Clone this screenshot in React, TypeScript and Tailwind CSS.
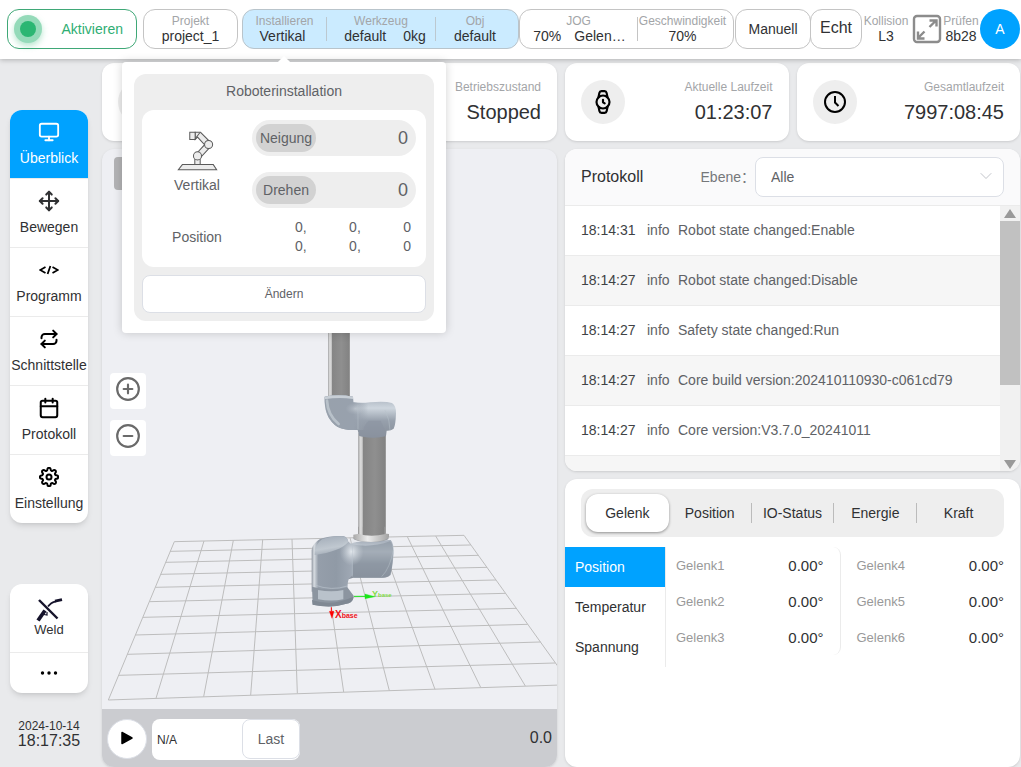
import { useState, type ReactNode } from 'react'
import { Calendar, ChevronDown, CircleMinus, CirclePlus, Monitor, Move, Repeat, Watch } from 'lucide-react'
import { FiSettings } from 'react-icons/fi'
import clsx from 'clsx'

const logs = [
  { time: '18:14:31', level: 'info', message: 'Robot state changed:Enable' },
  { time: '18:14:27', level: 'info', message: 'Robot state changed:Disable' },
  { time: '18:14:27', level: 'info', message: 'Safety state changed:Run' },
  { time: '18:14:27', level: 'info', message: 'Core build version:202410110930-c061cd79' },
  { time: '18:14:27', level: 'info', message: 'Core version:V3.7.0_20241011' },
]

const tabs = ['Gelenk', 'Position', 'IO-Status', 'Energie', 'Kraft']
const sections = ['Position', 'Temperatur', 'Spannung']

function CodeIcon() {
  return (
    <svg width="20" height="20" viewBox="0 0 20 20" fill="none" stroke="currentColor" strokeWidth="1.8">
      <path d="M6.5 7 1.2 10l5.3 3M13.5 7l5.3 3-5.3 3M11.4 6 8.6 14" />
    </svg>
  )
}

function ClockIcon() {
  return (
    <svg width="24" height="24" viewBox="0 0 24 24" fill="none" stroke="currentColor" strokeWidth="2">
      <circle cx="12" cy="12" r="10" />
      <path d="M12 6v6.5l3.5 3.5" />
    </svg>
  )
}

function ExpandIcon() {
  return (
    <svg width="30" height="30" viewBox="0 0 30 30" fill="none" stroke="#8c8c8c" strokeWidth="2.400">
      <rect x="2" y="2" width="26" height="26" rx="3" />
      <path d="M17.500 13l6.500-6.500M17.500 6.500H24.500V12.500M12.500 17.500l-6.500 6.500M6 17.500V24.500H12.500" />
    </svg>
  )
}

function WeldIcon() {
  return (
    <svg width="27" height="24" viewBox="0 0 27 24" fill="none" stroke="#15132b">
      <path d="M3 2l18.500 18.500" strokeWidth="2.400" />
      <path d="M2 22.500l7-10" strokeWidth="3.800" />
      <path d="M12 8.500c2-3 5-4.500 8-5.200" strokeWidth="1.800" />
      <path d="M19 3.200l7-1.600" strokeWidth="2.800" />
      <path d="M8 16.500l3 .5v-3" strokeWidth="1.200" />
    </svg>
  )
}

function VerticalMountIcon() {
  return (
    <svg width="41" height="41" viewBox="170 210 122 122" fill="#ececec" stroke="#5a5a5a" strokeWidth="3">
      <path d="M174 328H288L278 313H186Z" />
      <path d="M223 296h16v17h-16zM228 280l24-26 14 10-24 26z" />
      <path d="M224 217h16l26 26-13 12-22-24-7 7z" />
      <path d="M208 217h16v21h-16z" />
      <path d="M224 236l14-18" />
      <circle cx="231" cy="287" r="12" />
      <circle cx="264" cy="253" r="12" />
    </svg>
  )
}

// end points of the floor lines, projected
const rowsLeft = [[223, 65], [210, 94], [197, 127], [182, 163], [166, 202], [149, 245], [129, 292], [106, 345], [82, 403], [56, 466], [25, 540]]
const rowsRight = [[1092, 46], [1112, 75], [1135, 106], [1161, 142], [1188, 180], [1217, 220], [1249, 265], [1283, 313], [1322, 366], [1366, 429], [1413, 494]]
const colsTop = [[223, 65], [312, 63], [400, 61], [488, 59], [576, 57], [664, 55], [750, 53], [838, 52], [922, 50], [1007, 48], [1092, 46]]
const colsBottom = [[25, 540], [168, 535], [311, 530], [452, 525], [592, 520], [731, 516], [868, 512], [1005, 508], [1142, 502], [1276, 498], [1413, 494]]

function RobotScene() {
  return (
    <svg className="absolute inset-0 h-full w-full" viewBox="102 149 455 560" preserveAspectRatio="xMidYMid slice">
      <defs>
        <linearGradient id="tube" x1="0" x2="1">
          <stop offset="0" stopColor="#8c8c8c" />
          <stop offset="0.06" stopColor="#dcdcdc" />
          <stop offset="0.14" stopColor="#cfcfcf" />
          <stop offset="0.18" stopColor="#858585" />
          <stop offset="0.6" stopColor="#8f8f8f" />
          <stop offset="0.95" stopColor="#838383" />
          <stop offset="1" stopColor="#a5a5a5" />
        </linearGradient>
        <linearGradient id="ring" x1="0" x2="1">
          <stop offset="0" stopColor="#a9a9a9" />
          <stop offset="0.4" stopColor="#ececec" />
          <stop offset="1" stopColor="#a2a2a2" />
        </linearGradient>
        <linearGradient id="joint" x1="0" y1="0" x2="0" y2="1">
          <stop offset="0" stopColor="#a3acb8" />
          <stop offset="0.3" stopColor="#ced6de" />
          <stop offset="0.6" stopColor="#97a0ac" />
          <stop offset="1" stopColor="#868e99" />
        </linearGradient>
        <linearGradient id="elbow" x1="0" x2="1">
          <stop offset="0" stopColor="#98a1ac" />
          <stop offset="0.65" stopColor="#98a1ad" />
          <stop offset="1" stopColor="#98a1ad" stopOpacity="0" />
        </linearGradient>
        <linearGradient id="body" x1="0" x2="1">
          <stop offset="0" stopColor="#8d949e" />
          <stop offset="0.06" stopColor="#d8dde2" />
          <stop offset="0.16" stopColor="#959eaa" />
          <stop offset="0.6" stopColor="#909aa6" />
          <stop offset="1" stopColor="#a0a9b5" />
        </linearGradient>
        <linearGradient id="cap" x1="0" y1="0" x2="0.3" y2="1">
          <stop offset="0" stopColor="#a1abb7" />
          <stop offset="0.7" stopColor="#c0c8d0" />
          <stop offset="1" stopColor="#a3acb7" />
        </linearGradient>
        <radialGradient id="glow">
          <stop offset="0" stopColor="#e4e9ee" />
          <stop offset="1" stopColor="#c3cbd3" stopOpacity="0" />
        </radialGradient>
      </defs>

      {/* Floor */}
      <g transform="translate(100 520) scale(0.33333)" stroke="#bdbdbd" strokeWidth="3">
        {rowsLeft.map(([x, y], i) => (
          <line key={`r${i}`} x1={x} y1={y} x2={rowsRight[i][0]} y2={rowsRight[i][1]} />
        ))}
        {colsTop.map(([x, y], i) => (
          <line key={`c${i}`} x1={x} y1={y} x2={colsBottom[i][0]} y2={colsBottom[i][1]} />
        ))}
      </g>

      {/* Robot arm */}
      <g transform="translate(290 330) scale(0.33333)">
        <path d="M115-60H180V200H115Z" fill="url(#tube)" />
        <path d="M205 310H288V620H205Z" fill="url(#tube)" />

        <path d="M104 200Q145 192 189 200L190 217Q215 220 240 217Q285 213 306 219Q319 228 318 250Q317 285 311 296Q302 303 290 302L288 318Q250 328 208 318L203 300Q165 302 142 290Q106 266 104 215Z" fill="url(#joint)" />
        <path d="M104 200Q145 192 189 200L190 217Q215 220 235 218V300H203Q165 302 142 290Q106 266 104 215Z" fill="url(#elbow)" />
        <path d="M111 212Q113 256 146 282" fill="none" stroke="#c6ced6" strokeWidth="8" strokeLinecap="round" opacity=".7" />
        <ellipse cx="196" cy="236" rx="30" ry="18" fill="url(#glow)" opacity=".4" />
        <path d="M104 200Q145 192 189 200L189 207Q146 201 104 208Z" fill="#c8cfd6" />
        <path d="M218 302Q226 280 236 272H272Q282 290 288 318Q250 328 208 318L205 300Z" fill="#8c95a1" opacity=".6" />
        <path d="M204 225V298M285 240Q300 270 300 300" fill="none" stroke="#b9c2cb" strokeWidth="1.500" />

        <path d="M182 642Q200 632 240 634L302 630Q312 640 311 670Q307 720 300 735Q292 744 275 743H190L175 748Z" fill="url(#joint)" />
        <path d="M182 642Q240 655 300 634Q310 640 310 670L303 734Q292 744 275 743H190Z" fill="#89929e" opacity=".6" />
        <path d="M65 660Q68 640 90 627Q120 616 160 618Q173 622 175 635L188 645V735L176 748Q172 760 172 785H65Z" fill="url(#body)" />
        <path d="M74 675Q72 645 96 628Q125 616 160 619Q175 624 174 637Q150 665 74 675Z" fill="url(#cap)" />
        <ellipse cx="185" cy="665" rx="36" ry="42" fill="url(#glow)" />
        <path d="M187 640V740M310 660Q300 715 275 740" fill="none" stroke="#b9c2cb" strokeWidth="1.500" />

        <path d="M66 770Q120 786 172 772L191 797Q192 812 176 820Q125 836 68 824Z" fill="#8c95a0" />
        <path d="M84 780Q125 787 160 780V808Q125 815 84 808Z" fill="#b9c2cb" />
        <path d="M66 810Q125 830 190 800Q190 814 176 820Q125 836 68 824Z" fill="#7f8893" />
        <path d="M74 765Q125 784 172 768" fill="none" stroke="#b9c2cb" strokeWidth="2" />

        <ellipse cx="243" cy="625" rx="53" ry="11" fill="#9ba0a5" />
        <path d="M190 614Q240 602 297 612V622Q288 634 243 636Q198 634 190 624Z" fill="url(#ring)" />
        <path d="M205 590H286V612Q245 622 205 612Z" fill="url(#tube)" />

        <g fill="#19e619" stroke="#19e619">
          <path d="M192 799h40" strokeWidth="3" />
          <path d="M225 792l30 8-30 6z" />
        </g>
        <g fill="#f00" stroke="#f00">
          <path d="M124 832v12" strokeWidth="3" />
          <path d="M118 844h14l-6 21z" />
        </g>
      </g>
      <g className="font-bold">
        <text x="372" y="597" fontSize="9" fill="#82dc48">
          Y<tspan fontSize="6">base</tspan>
        </text>
        <text x="335" y="618" fontSize="10" fill="#f01020">
          X<tspan fontSize="7">base</tspan>
        </text>
      </g>
    </svg>
  )
}

function Stat({ label, children, className }: { label: string; children: ReactNode; className?: string }) {
  return (
    <span className={clsx('flex flex-col items-center justify-center whitespace-nowrap', className)}>
      <span className="text-xs leading-[15px] text-[#a3a5a8]">{label}</span>
      <span className="text-sm leading-[15px] text-[#303133]">{children}</span>
    </span>
  )
}

function Pill({ label }: { label: string }) {
  return (
    <div className="flex h-9 items-center justify-between rounded-full bg-[#eee] pl-1 pr-2">
      <span className="flex h-7 w-[60px] items-center justify-center rounded-full bg-[#d2d2d2]">{label}</span>
      <span className="text-lg">0</span>
    </div>
  )
}

function InstallPopover() {
  return (
    <div className="absolute -left-[121px] top-[52px] z-20 w-[324px] rounded-sm bg-white p-3 text-sm text-[#606266] shadow-[0_0_10px_rgba(0,0,0,0.18)]">
      <div className="absolute -top-1 left-1/2 h-2.5 w-2.5 -translate-x-1/2 rotate-45 bg-white" />
      <div className="relative rounded-xl bg-[#eee] px-2 pb-2">
        <h2 className="flex h-9 items-center justify-center pb-0.5">Roboterinstallation</h2>
        <div className="rounded-xl bg-white pb-[11px] pr-2.5 pt-2.5">
          <div className="flex">
            <div className="flex w-[110px] flex-col items-center gap-1 pt-2.5">
              <VerticalMountIcon />
              <span>Vertikal</span>
            </div>
            <div className="flex flex-1 flex-col gap-4">
              <Pill label="Neigung" />
              <Pill label="Drehen" />
            </div>
          </div>
          <div className="mt-2 flex items-center justify-between pr-[5px] pt-0.5">
            <span className="w-[110px] text-center">Position</span>
            <div className="w-[116px] leading-[19px]">
              <div className="flex justify-between">
                <span>0,</span>
                <span>0,</span>
                <span>0</span>
              </div>
              <div className="flex justify-between">
                <span>0,</span>
                <span>0,</span>
                <span>0</span>
              </div>
            </div>
          </div>
        </div>
        <button className="mt-2 h-[38px] w-full rounded-lg border border-[#dcdfe6] bg-white text-xs">Ändern</button>
      </div>
    </div>
  )
}

function Header() {
  return (
    <header className="relative z-10 flex h-[59px] items-center bg-white pb-px pl-[7px] pr-px shadow-[0_1px_5px_rgba(0,0,0,0.25)]">
      <button className="flex h-10 w-[130px] shrink-0 items-center justify-between rounded-xl border border-[#3fa877] pl-1.5 pr-[13px] text-sm text-[#2fae73]">
        <span className="flex h-7 w-7 items-center justify-center rounded-full bg-[#94dab9] shadow-[0_3px_6px_rgba(46,184,114,0.35)]">
          <span className="h-4 w-4 rounded-full bg-[#2bb673]" />
        </span>
        Aktivieren
      </button>
      <button className="ml-1.5 h-10 w-[95px] shrink-0 rounded-xl border border-[#c4c4c4]">
        <Stat label="Projekt">project_1</Stat>
      </button>

      <div className="ml-1 flex h-10 flex-1 items-center rounded-xl border border-[#b9c4cb] bg-[#cbebff]">
        <div className="relative h-full w-[84px]">
          <button className="block h-full w-full">
            <Stat label="Installieren" className="h-6 border-r border-[#bcc8d0]">
              <span className="mr-1">Vertikal</span>
            </Stat>
          </button>
          <InstallPopover />
        </div>
        <button className="h-full w-[109px]">
          <Stat label="Werkzeug" className="h-6 border-r border-[#bcc8d0]">
            <span className="ml-2 mr-[17px]">default</span>0kg
          </Stat>
        </button>
        <button className="h-full flex-1 pr-1">
          <Stat label="Obj" className="h-6">
            default
          </Stat>
        </button>
      </div>

      <div className="flex h-10 w-[215px] shrink-0 items-center rounded-xl border border-[#c4c4c4]">
        <button className="h-full flex-1">
          <Stat label="JOG" className="h-6 border-r border-[#c4c4c4]">
            <span className="ml-0.5 mr-[13px]">70%</span>Gelen…
          </Stat>
        </button>
        <button className="h-full w-[95px] pr-1.5">
          <Stat label="Geschwindigkeit">70%</Stat>
        </button>
      </div>

      <button className="ml-px h-10 w-[76px] shrink-0 rounded-xl border border-[#c4c4c4] text-sm text-[#303133]">Manuell</button>
      <button className="-ml-px h-10 w-[52px] shrink-0 rounded-xl border border-[#c4c4c4] pb-0.5 text-base text-[#303133]">Echt</button>
      <Stat label="Kollision" className="mr-0.5 w-12 shrink-0">
        L3
      </Stat>
      <button className="shrink-0" title="Vollbild">
        <ExpandIcon />
      </button>
      <Stat label="Prüfen" className="w-[38px] shrink-0">
        8b28
      </Stat>
      <button className="h-10 w-10 shrink-0 rounded-full bg-[#00a2ff] text-sm text-white">A</button>
    </header>
  )
}

const navItems = [
  { label: 'Überblick', icon: <Monitor size={22} strokeWidth={2} /> },
  { label: 'Bewegen', icon: <Move size={22} strokeWidth={2.2} className="text-[#303133]" /> },
  { label: 'Programm', icon: <CodeIcon /> },
  { label: 'Schnittstelle', icon: <Repeat size={20} strokeWidth={2.4} /> },
  { label: 'Protokoll', icon: <Calendar size={22} strokeWidth={2.2} /> },
  { label: 'Einstellung', icon: <FiSettings size={20} strokeWidth={2.4} /> },
]

function Sidebar() {
  const [active, setActive] = useState('Überblick')

  return (
    <aside className="flex w-[102px] shrink-0 flex-col pl-2.5 pr-3.5 pt-[51px]">
      <nav className="divide-y divide-[#ebebeb] overflow-hidden rounded-xl bg-white shadow-md">
        {navItems.map((item) => (
          <button
            key={item.label}
            onClick={() => setActive(item.label)}
            className={clsx(
              'box-content flex h-[68px] w-full flex-col items-center text-sm text-[#303133]',
              item.label === active && 'bg-[#00a2ff]',
            )}
          >
            <span className={clsx('flex h-11 items-center', item.label === active ? 'text-white' : 'text-black')}>{item.icon}</span>
            <span className={clsx('leading-2', item.label === active && 'text-white')}>{item.label}</span>
          </button>
        ))}
      </nav>

      <div className="mt-[61px] divide-y divide-[#ebebeb] rounded-xl bg-white shadow-md">
        <button className="box-content flex h-[68px] w-full flex-col items-center text-[13px] leading-4 text-[#303133]">
          <span className="pt-3.5">
            <WeldIcon />
          </span>
          Weld
        </button>
        <button className="box-content flex h-10 w-full items-center justify-center" title="Mehr">
          <svg width="18" height="4" viewBox="0 0 18 4">
            <circle cx="2.500" cy="2" r="1.700" />
            <circle cx="9" cy="2" r="1.700" />
            <circle cx="15.500" cy="2" r="1.700" />
          </svg>
        </button>
      </div>

      <div className="mt-[26px] text-center text-[#303133]">
        <div className="text-xs leading-[14px]">2024-10-14</div>
        <div className="text-base leading-4">18:17:35</div>
      </div>
    </aside>
  )
}

function StatusCard({ icon, label, value }: { icon?: ReactNode; label: string; value: string }) {
  return (
    <div className="flex h-[78px] flex-1 items-center justify-between rounded-xl bg-white px-4 shadow-sm">
      <span className="flex h-11 w-11 items-center justify-center rounded-full bg-[#eee]">{icon}</span>
      <div className="text-right">
        <div className="text-xs leading-5 text-[#a3a5a8]">{label}</div>
        <div className="text-xl leading-[30px] text-[#303133]">{value}</div>
      </div>
    </div>
  )
}

function RobotView() {
  return (
    <section className="flex flex-1 flex-col overflow-hidden rounded-xl bg-[#eeeff3] shadow-sm">
      <div className="relative flex-1">
        <RobotScene />
        <div className="relative flex flex-col items-start px-2 pt-2">
          <div className="ml-1 h-[33px] w-10 rounded-sm bg-[#b3b3b5]" />
          <button className="mt-[183px] flex h-9 w-9 justify-center rounded bg-white pt-[3px] text-[#6a6a6a]" title="Vergrößern">
            <CirclePlus size={26} strokeWidth={2} />
          </button>
          <button className="mt-[11px] flex h-9 w-9 justify-center rounded bg-white pt-[3px] text-[#6a6a6a]" title="Verkleinern">
            <CircleMinus size={26} strokeWidth={2} />
          </button>
        </div>
      </div>
      <div className="flex h-[58px] items-start bg-[#cbccd0] px-[5px] pt-2.5">
        <button className="mr-[5px] flex h-10 w-10 items-center justify-center rounded-full border border-[#dcdfe6] bg-white pb-0.5" title="Start">
          <svg width="14" height="14" viewBox="0 0 14 14" stroke="#000" strokeWidth="1.500" strokeLinejoin="round">
            <path d="M2 1.500v11L12 7z" />
          </svg>
        </button>
        <div className="flex h-[41px] w-[148px] rounded-lg bg-white">
          <input aria-label="Programm" defaultValue="N/A" className="w-[90px] bg-transparent pl-[5px] text-xs text-[#303133] outline-none" />
          <button className="h-10 w-[58px] rounded-lg border border-[#dcdfe6] text-sm text-[#606266]">Last</button>
        </div>
        <span className="ml-auto text-base leading-[38px] text-[#303133]">0.0</span>
      </div>
    </section>
  )
}

function LogPanel() {
  return (
    <section className="overflow-hidden rounded-xl bg-white shadow-sm">
      <div className="flex h-[57px] items-center border-b border-[#ebebeb] bg-[#fafafb] px-4">
        <h2 className="text-base text-[#303133]">Protokoll</h2>
        <label htmlFor="level" className="ml-auto text-sm text-[#75777a]">
          Ebene：
        </label>
        <div className="relative w-[249px]">
          <select id="level" className="h-10 w-full appearance-none rounded-lg border border-[#dcdfe6] bg-white px-[15px] text-sm text-[#606266]">
            <option>Alle</option>
          </select>
          <ChevronDown size={20} strokeWidth={1} className="pointer-events-none absolute right-2 top-[9px] text-[#b4b8bf]" />
        </div>
      </div>
      <div className="flex h-[265px] overflow-hidden">
        <div className="flex-1 overflow-hidden">
          <table className="w-full border-separate border-spacing-0 text-sm text-[#606266]">
            <tbody>
              {logs.map((log, i) => (
                <tr key={i} className="even:bg-[#f6f6f6] [&>td]:h-[50px] [&>td]:border-b [&>td]:border-[#ebebeb] [&>td]:pb-0.5">
                  <td className="w-[82px] pl-4 text-[#404245]">{log.time}</td>
                  <td className="w-[31px]">{log.level}</td>
                  <td>{log.message}</td>
                </tr>
              ))}
              <tr className="h-[50px] bg-[#f6f6f6]">
                <td colSpan={3} />
              </tr>
            </tbody>
          </table>
        </div>
        {/* Scrollbar */}
        <div className="flex w-5 flex-col items-center bg-[#f1f1f1]">
          <svg width="12" height="15" viewBox="0 0 12 15" fill="#999">
            <path d="M0 12 6 3l6 9z" />
          </svg>
          <div className="h-[164px] w-full bg-[#c1c1c1]" />
          <svg className="mt-auto" width="12" height="14" viewBox="0 0 12 14" fill="#999">
            <path d="M0 3h12l-6 9z" />
          </svg>
        </div>
      </div>
    </section>
  )
}

function JointList({ joints, className }: { joints: string[]; className?: string }) {
  return (
    <dl className={clsx('flex-1', className)}>
      {joints.map((joint) => (
        <div key={joint} className="flex h-9 items-center justify-between pt-0.5">
          <dt className="text-[13px] text-[#999]">{joint}</dt>
          <dd className="text-[15px] text-[#303133]">0.00°</dd>
        </div>
      ))}
    </dl>
  )
}

function JointPanel() {
  const [tab, setTab] = useState('Gelenk')
  const [section, setSection] = useState('Position')

  return (
    <section className="flex-1 rounded-xl bg-white pt-2.5 text-sm text-[#303133] shadow-sm">
      <div className="mx-4 grid h-12 grid-cols-5 items-center rounded-xl bg-[#eee] py-[5px] pl-[5px] pr-1">
        {tabs.map((name, i) => (
          <button
            key={name}
            onClick={() => setTab(name)}
            className={clsx(
              name === tab ? 'h-[38px] rounded-xl bg-white shadow-[0_1px_3px_rgba(0,0,0,0.4)]' : 'h-5',
              name !== tab && i < tabs.length - 1 && 'border-r border-[#bbb]',
            )}
          >
            {name}
          </button>
        ))}
      </div>
      <div className="mt-2.5 flex items-start">
        <div className="w-[101px] border-r border-[#ebebeb]">
          {sections.map((name) => (
            <button
              key={name}
              onClick={() => setSection(name)}
              className={clsx('block h-10 w-full pl-2.5 text-left', name === section && 'bg-[#00a2ff] text-white')}
            >
              {name}
            </button>
          ))}
        </div>
        <JointList joints={['Gelenk1', 'Gelenk2', 'Gelenk3']} className="rounded-lg border-r border-[#ebebeb] pl-2.5 pr-4" />
        <JointList joints={['Gelenk4', 'Gelenk5', 'Gelenk6']} className="px-4" />
      </div>
    </section>
  )
}

export default function App() {
  return (
    <div className="flex min-h-screen flex-col bg-[#e9eaec] font-['Liberation_Sans','Noto_Sans_CJK_SC',sans-serif]">
      <Header />
      <div className="flex flex-1 pr-px">
        <Sidebar />
        <main className="grid flex-1 grid-cols-2 gap-2 pt-1">
          <div className="flex flex-col gap-2">
            <div className="flex">
              <StatusCard label="Betriebszustand" value="Stopped" />
            </div>
            <RobotView />
          </div>
          <div className="flex flex-col gap-2">
            <div className="flex gap-2">
              <StatusCard icon={<Watch size={26} />} label="Aktuelle Laufzeit" value="01:23:07" />
              <StatusCard icon={<ClockIcon />} label="Gesamtlaufzeit" value="7997:08:45" />
            </div>
            <LogPanel />
            <JointPanel />
          </div>
        </main>
      </div>
    </div>
  )
}
